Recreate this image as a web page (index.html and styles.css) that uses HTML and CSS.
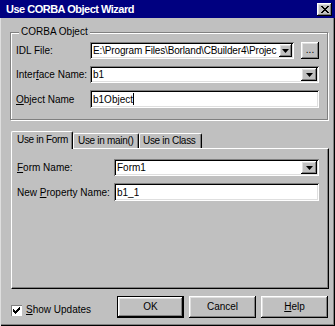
FILE: index.html
```html
<!DOCTYPE html>
<html>
<head>
<meta charset="utf-8">
<link rel="stylesheet" href="styles.css">
</head>
<body>
  <div class="window">
    <div class="titlebar">
      <span class="title">Use CORBA Object Wizard</span>
      <button class="close raised">
        <svg width="8" height="7" viewBox="0 0 8 7"><path d="M0 0h2v1H0zM6 0h2v1H6zM1 1h2v1H1zM5 1h2v1H5zM2 2h4v1H2zM3 3h2v1H3zM2 4h4v1H2zM1 5h2v1H1zM5 5h2v1H5zM0 6h2v1H0zM6 6h2v1H6z" fill="#000"/></svg>
      </button>
    </div>

    <div class="body">
      <fieldset class="group">
        <legend>CORBA Object</legend>
        <div class="grid obj-grid">
          <label>IDL File:</label>
          <div class="field-row">
            <div class="combo sunken">
              <span class="value path">E:\Program Files\Borland\CBuilder4\Projec</span>
              <span class="drop raised small">
                <svg width="7" height="4" viewBox="0 0 7 4"><path d="M0 0h7L3.5 4z" fill="#000"/></svg>
              </span>
            </div>
            <button class="browse raised">...</button>
          </div>

          <label>Inter<u>f</u>ace Name:</label>
          <div class="combo sunken">
            <span class="value">b1</span>
            <span class="drop raised">
              <svg width="7" height="4" viewBox="0 0 7 4"><path d="M0 0h7L3.5 4z" fill="#000"/></svg>
            </span>
          </div>

          <label><u>O</u>bject Name</label>
          <div class="edit sunken tall">
            <span class="value">b1Object</span><span class="caret"></span>
          </div>
        </div>
      </fieldset>

      <div class="tabs">
        <div class="tab active">Use in Form</div>
        <div class="tab">Use in main()</div>
        <div class="tab">Use in Class</div>
      </div>
      <div class="panel">
        <div class="grid form-grid">
          <label><u>F</u>orm Name:</label>
          <div class="combo sunken">
            <span class="value">Form1</span>
            <span class="drop raised">
              <svg width="7" height="4" viewBox="0 0 7 4"><path d="M0 0h7L3.5 4z" fill="#000"/></svg>
            </span>
          </div>

          <label>New <u>P</u>roperty Name:</label>
          <div class="edit sunken tall">
            <span class="value">b1_1</span>
          </div>
        </div>
      </div>

      <div class="footer">
        <label class="check">
          <span class="box">
            <svg width="7" height="7" viewBox="0 0 7 7"><path d="M6 0h1v1H6zM5 1h2v1H5zM0 2h1v1H0zM4 2h3v1H4zM0 3h2v1H0zM3 3h3v1H3zM0 4h5v1H0zM1 5h3v1H1zM2 6h1v1H2z" fill="#000"/></svg>
          </span>
          <span><u>S</u>how Updates</span>
        </label>
        <div class="buttons">
          <button class="btn raised default">OK</button>
          <button class="btn raised">Cancel</button>
          <button class="btn raised"><u>H</u>elp</button>
        </div>
      </div>
    </div>
  </div>
</body>
</html>
```

FILE: styles.css
```css
* {
    box-sizing: border-box;
}
body {
    margin: 0;
    background: #c0c0c0;
}
button {
    font: inherit;
    color: inherit;
    border: none;
    padding: 0;
    margin: 0;
    background: #c0c0c0;
}
/* the dialog frame */
.window {
    width: 335px;
    height: 326px;
    background: #c0c0c0;
    box-shadow: inset 1px 0 #dfdfdf, inset -1px -1px #000, inset -2px -2px #808080;
    font-family: "Liberation Sans", Arial, sans-serif;
    font-size: 10px;
    color: #000;
}
/* 3d borders */
.raised {
    box-shadow: inset -1px -1px #000, inset 1px 1px #fff, inset -2px -2px #808080, inset 2px 2px #dfdfdf;
}
.sunken {
    box-shadow: inset 1px 1px #808080, inset -1px -1px #fff, inset 2px 2px #000, inset -2px -2px #dfdfdf;
}
/* title bar */
.titlebar {
    height: 18px;
    display: flex;
    align-items: center;
    padding: 0 3px 0 6px;
    background: #000080;
    color: #fff;
}
.title {
    font-size: 11px;
    font-weight: bold;
    letter-spacing: -0.5px;
}
.close {
    margin-left: auto;
    width: 15px;
    height: 13px;
    display: flex;
    align-items: center;
    justify-content: center;
}
/* dialog body */
.body {
    padding: 8px 7px 0 10px;
}
.group {
    margin: 0;
    padding: 4px 8px 11px 5px;
    border: 1px solid #808080;
    box-shadow: inset 1px 1px #fff, 1px 1px #fff;
    min-width: 0;
}
.group legend {
    margin-left: 3px;
    padding: 0 2px;
    line-height: 12px;
    background: #c0c0c0;
}
.grid {
    display: grid;
    row-gap: 7px;
    align-items: center;
}
.obj-grid {
    grid-template-columns: 74px minmax(0, 1fr);
    grid-template-rows: 17px 17px 18px;
}
.form-grid {
    grid-template-columns: 97px minmax(0, 1fr);
    grid-template-rows: 17px 18px;
}
.grid label {
    white-space: nowrap;
}
.field-row {
    display: flex;
    gap: 7px;
    height: 17px;
    min-width: 0;
}
/* edit and combo boxes */
.combo, .edit {
    height: 17px;
    display: flex;
    align-items: center;
    background: #fff;
    padding: 2px 2px 2px 3px;
    min-width: 0;
}
.edit.tall {
    height: 18px;
}
.field-row .combo {
    flex: 1;
}
.value {
    flex: 1;
    min-width: 0;
    white-space: nowrap;
    overflow: hidden;
    line-height: 13px;
}
.value.path {
    letter-spacing: -0.15px;
}
.edit .value {
    flex: none;
}
.caret {
    width: 1px;
    height: 12px;
    background: #000;
}
.drop {
    flex: none;
    width: 16px;
    height: 13px;
    display: flex;
    align-items: center;
    justify-content: center;
    background: #c0c0c0;
}
.drop.small {
    width: 13px;
}
.browse {
    flex: none;
    width: 18px;
    height: 17px;
    padding-bottom: 3px;
}
/* tabs */
.tabs {
    display: flex;
    align-items: flex-end;
    height: 17px;
    margin: 11px 0 0 1px;
}
.tab {
    height: 15px;
    padding: 0 0 0 5px;
    line-height: 14px;
    letter-spacing: -0.3px;
    border-top: 1px solid #fff;
    border-left: 1px solid #fff;
    border-right: 1px solid #000;
    border-radius: 2px 2px 0 0;
    box-shadow: inset -1px 0 #808080;
    white-space: nowrap;
}
.tab:nth-child(1) {
    width: 62px;
}
.tab:nth-child(2) {
    width: 66px;
    padding-left: 4px;
}
.tab:nth-child(3) {
    width: 63px;
    padding-left: 3px;
}
.tab.active {
    height: 18px;
    margin-bottom: -1px;
    position: relative;
    z-index: 1;
    background: #c0c0c0;
    line-height: 15px;
}
.panel {
    height: 141px;
    margin: 0 -1px 0 1px;
    padding: 10px 9px 0 5px;
    border-top: 1px solid #fff;
    border-left: 1px solid #fff;
    border-right: 1px solid #000;
    border-bottom: 1px solid #000;
    box-shadow: inset -1px -1px #808080;
}
/* footer */
.footer {
    display: flex;
    align-items: flex-end;
    margin-top: 7px;
    height: 22px;
}
.check {
    display: flex;
    align-items: center;
    gap: 4px;
    margin: 0 0 2px 1px;
    line-height: 12px;
}
.check .box {
    width: 11px;
    height: 11px;
    display: flex;
    align-items: center;
    justify-content: center;
    background: #fff;
    box-shadow: inset 1px 1px #808080, inset -1px -1px #fff;
}
.buttons {
    margin-left: auto;
    display: flex;
    gap: 5px;
}
.btn {
    width: 67px;
    height: 22px;
    padding-bottom: 1px;
}
.btn.default {
    box-shadow: inset 0 0 0 1px #000, inset -2px -2px #000, inset 2px 2px #fff, inset -3px -3px #808080, inset 3px 3px #dfdfdf;
}
```
